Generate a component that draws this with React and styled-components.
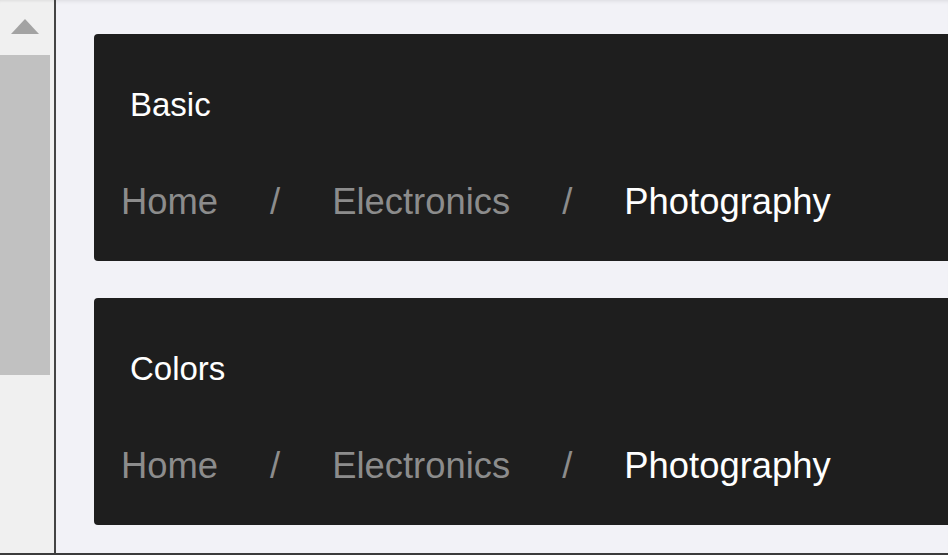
import React from "react";
import styled, { createGlobalStyle } from "styled-components";

const Global = createGlobalStyle`
  html, body { margin: 0; padding: 0; overflow: hidden; }
  body { font-family: "Liberation Sans", Arial, sans-serif; background: #f2f2f7; }
`;

const Frame = styled.div`
  display: flex;
  height: 555px;
  box-sizing: border-box;
  border-bottom: 2px solid #3c3c3c;
  overflow: hidden;
`;

const ScrollBar = styled.div`
  flex: 0 0 54px;
  display: flex;
  flex-direction: column;
  background: #f0f0f0;
  border-right: 2px solid #444;
  box-shadow: inset 0 3px 3px -2px rgba(0, 0, 0, 0.08);
`;

const ArrowButton = styled.div`
  width: 50px;
  height: 55px;
  display: flex;
  justify-content: center;
  padding-top: 19px;
  box-sizing: border-box;
`;

const ArrowUp = styled.div`
  width: 0;
  height: 0;
  border-left: 14.5px solid transparent;
  border-right: 14.5px solid transparent;
  border-bottom: 15px solid #a3a3a3;
`;

const Thumb = styled.div`
  width: 50px;
  height: 320px;
  background: #c1c1c1;
`;

const Main = styled.main`
  flex: 1;
  min-width: 0;
  display: flex;
  flex-direction: column;
  gap: 37px;
  padding: 34px 0 0 38px;
  background: #f2f2f7;
  box-shadow: inset 0 4px 4px -3px rgba(0, 0, 0, 0.1);
`;

const Panel = styled.section`
  width: 1000px;
  flex: 0 0 auto;
  box-sizing: border-box;
  height: 227px;
  background: #1e1e1e;
  border-radius: 4px;
  padding: 52px 0 0 0;
  display: flex;
  flex-direction: column;
`;

const Title = styled.h2`
  margin: 0 0 57px 0;
  padding-left: 36px;
  font-size: 33px;
  line-height: 38px;
  font-weight: 400;
  color: #ffffff;
`;

const Crumbs = styled.nav`
  display: flex;
  align-items: baseline;
  padding-left: 27px;
  font-size: 36.4px;
  line-height: 41px;
`;

const Crumb = styled.span`
  color: ${(p) => (p.$active ? "#ffffff" : "#8c8c8c")};
`;

const Sep = styled.span`
  color: #8c8c8c;
  padding: 0 52px 0 52px;
`;

const Breadcrumb = ({ items }) => (
  <Crumbs>
    {items.map((it, i) => (
      <React.Fragment key={it}>
        {i > 0 && <Sep>/</Sep>}
        <Crumb $active={i === items.length - 1}>{it}</Crumb>
      </React.Fragment>
    ))}
  </Crumbs>
);

const items = ["Home", "Electronics", "Photography"];

export default function App() {
  return (
    <>
      <Global />
      <Frame>
        <ScrollBar>
          <ArrowButton>
            <ArrowUp />
          </ArrowButton>
          <Thumb />
        </ScrollBar>
        <Main>
          <Panel>
            <Title>Basic</Title>
            <Breadcrumb items={items} />
          </Panel>
          <Panel>
            <Title>Colors</Title>
            <Breadcrumb items={items} />
          </Panel>
        </Main>
      </Frame>
    </>
  );
}
